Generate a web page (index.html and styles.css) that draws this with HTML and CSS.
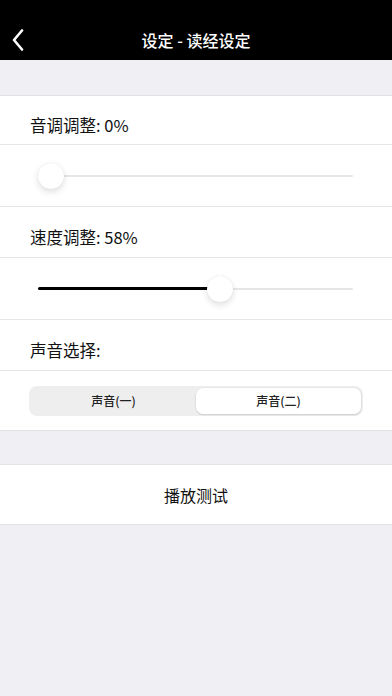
FILE: index.html
```html
<!DOCTYPE html>
<html lang="zh">
<head>
<meta charset="utf-8">
<meta name="viewport" content="width=device-width, initial-scale=1">
<title>设定 - 读经设定</title>
<link rel="stylesheet" href="styles.css">
</head>
<body>
<header class="navbar">
  <button class="back" aria-label="返回">
    <svg width="14" height="22" viewBox="0 0 14 22"><path d="M11 1.5 L3 11 L11 20.5" fill="none" stroke="#fff" stroke-width="2.6" stroke-linecap="round" stroke-linejoin="round"/></svg>
  </button>
  <h1 class="title">设定 - 读经设定</h1>
  <span></span>
</header>

<section class="group first">
  <div class="row label first-label">音调调整: 0%</div>
  <div class="row slider-row">
    <div class="slider">
      <div class="track"></div>
      <div class="thumb" style="left: calc((100% - 26px) * 0)"></div>
    </div>
  </div>
  <div class="row label">速度调整: 58%</div>
  <div class="row slider-row">
    <div class="slider">
      <div class="track"></div>
      <div class="fill" style="width: calc((100% - 26px) * 0.585 + 13px)"></div>
      <div class="thumb" style="left: calc((100% - 26px) * 0.585)"></div>
    </div>
  </div>
  <div class="row label">声音选择:</div>
  <div class="row seg-row">
    <div class="segmented">
      <div class="seg">声音(一)</div>
      <div class="seg active">声音(二)</div>
    </div>
  </div>
</section>

<section class="group second">
  <div class="row button-row">播放测试</div>
</section>
</body>
</html>
```

FILE: styles.css
```css
* { box-sizing: border-box; }
html, body { margin: 0; padding: 0; }
body {
  background: #efeff4;
  font-family: "Noto Sans CJK SC", "Noto Sans", sans-serif;
  color: #111;
  width: 392px;
  min-height: 696px;
}
.navbar {
  height: 60px;
  padding-top: 20px;
  background: #000;
  display: grid;
  grid-template-columns: 44px 1fr 44px;
  align-items: center;
}
.back {
  background: none;
  border: 0;
  padding: 0 0 0 11px;
  margin: 0;
  height: 40px;
  display: flex;
  align-items: center;
  cursor: pointer;
}
.title {
  margin: 0;
  text-align: center;
  color: #fff;
  font-size: 16px;
  font-weight: 500;
}
.group {
  background: #fff;
  border-top: 1px solid #e3e3e6;
  border-bottom: 1px solid #e3e3e6;
}
.group.first { margin-top: 35px; }
.group.second { margin-top: 33px; }
.row {
  border-bottom: 1px solid #e6e6e8;
  display: flex;
  align-items: center;
}
.row:last-child { border-bottom: 0; }
.label {
  height: 51px;
  padding: 10px 0 0 30px;
  font-size: 16.5px;
}
.label.first-label { height: 49px; }
.slider-row {
  height: 62px;
  padding: 0 39px 0 38px;
}
.slider {
  position: relative;
  flex: 1;
  height: 28px;
}
.track {
  position: absolute;
  left: 0; right: 0;
  top: 13px;
  height: 2px;
  background: #e6e6e6;
  border-radius: 1px;
}
.fill {
  position: absolute;
  left: 0;
  top: 12.5px;
  height: 3px;
  border-radius: 2px;
  background: #000;
}
.thumb {
  position: absolute;
  top: 1px;
  width: 26px;
  height: 26px;
  border-radius: 50%;
  background: #fff;
  box-shadow: 0 3px 7px rgba(0,0,0,0.13), 0 0 1px rgba(0,0,0,0.12);
}
.seg-row {
  height: 59px;
  padding: 0 29px;
}
.segmented {
  flex: 1;
  height: 30px;
  background: #eeeeef;
  border-radius: 8px;
  padding: 2px;
  display: flex;
}
.seg {
  flex: 1;
  display: flex;
  align-items: center;
  justify-content: center;
  font-size: 12px;
  font-weight: 500;
  color: #222;
  border-radius: 7px;
}
.seg.active {
  background: #fff;
  box-shadow: 0 1px 2px rgba(0,0,0,0.12), 0 0 0 0.5px rgba(0,0,0,0.05);
}
.button-row {
  height: 59px;
  justify-content: center;
  font-size: 16px;
  padding-top: 1px;
}
```
